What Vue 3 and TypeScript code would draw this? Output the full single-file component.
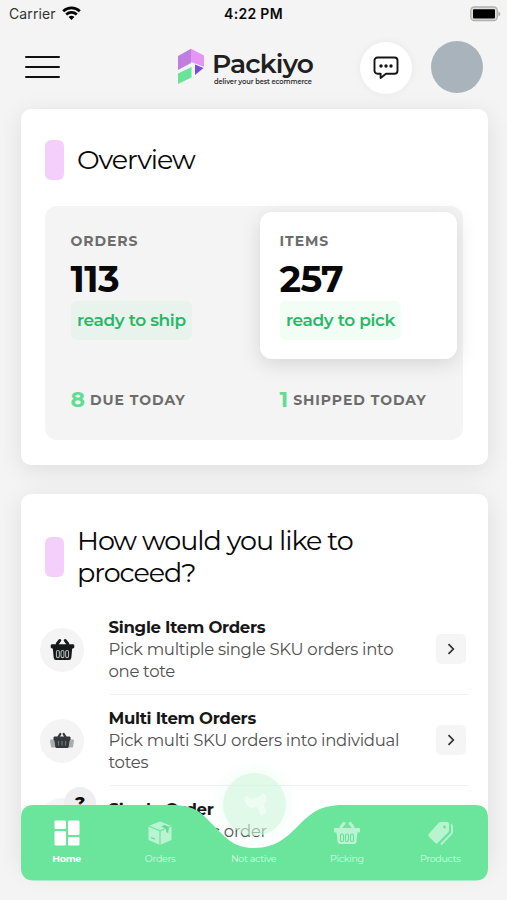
<script setup lang="ts">
interface Stat {
  label: string
  value: string
  badge: string
  raised: boolean
}
interface Count {
  value: string
  label: string
}
interface Task {
  title: string
  lines: string[]
  icon: 'single' | 'multi'
}
interface Tab {
  label: string
  icon: string
  active: boolean
}

const stats: Stat[] = [
  { label: 'ORDERS', value: '113', badge: 'ready to ship', raised: false },
  { label: 'ITEMS', value: '257', badge: 'ready to pick', raised: true },
]
const counts: Count[] = [
  { value: '8', label: 'DUE TODAY' },
  { value: '1', label: 'SHIPPED TODAY' },
]
const tasks: Task[] = [
  { title: 'Single Item Orders', lines: ['Pick multiple single SKU orders into', 'one tote'], icon: 'single' },
  { title: 'Multi Item Orders', lines: ['Pick multi SKU orders into individual', 'totes'], icon: 'multi' },
]
const tabs: Tab[] = [
  { label: 'Home', icon: 'home', active: true },
  { label: 'Orders', icon: 'box', active: false },
  { label: 'Not active', icon: 'none', active: false },
  { label: 'Picking', icon: 'basket', active: false },
  { label: 'Products', icon: 'tags', active: false },
]
</script>

<template>
  <main class="screen">
    <div class="status">
      <div class="carrier">
        <span>Carrier</span>
        <svg width="19" height="15" viewBox="0 0 19 15" fill="none" stroke="#050505" stroke-width="2.7">
          <path d="M1.2 5.2C6 .7 13 .7 17.8 5.2" />
          <path d="M4.2 8.5c3-2.8 7.600-2.800 10.600 0" />
          <path d="M6.600 10.900c1.700-1.500 4.100-1.500 5.800 0L9.500 14z" fill="#050505" stroke="none" />
        </svg>
      </div>
      <span class="clock">4:22 PM</span>
      <svg class="battery" width="31" height="16" viewBox="0 0 31 16">
        <rect x=".8" y="1" width="26.500" height="13.500" rx="3.500" fill="#dededb" stroke="#b0b0ad" stroke-width="1.300" />
        <rect x="3" y="3.200" width="22" height="9.200" rx="1" fill="#000" />
        <path d="M28.500 5.500c2.300.8 2.300 4 0 4.800z" fill="#a5a5a2" />
      </svg>
    </div>

    <header class="header">
      <button class="menu" aria-label="Menu"><i></i><i></i><i></i></button>
      <div class="logo">
        <svg width="28" height="37" viewBox="0 0 28 37">
          <path d="M1 8 14 .8V15L1 22z" fill="#c07ee0" />
          <path d="M14 .8 27 7.500v11.200L14 14z" fill="#e595f5" />
          <path d="M18 16.500 26.500 20 18 27z" fill="#7a4be3" />
          <path d="M1 25.500 14.500 19v10.500L1 36z" fill="#68e399" />
        </svg>
        <div class="wordmark">
          <span class="brand">Packiyo</span>
          <span class="slogan">deliver your best ecommerce</span>
        </div>
      </div>
      <button class="chat" aria-label="Messages">
        <svg width="26" height="24" viewBox="0 0 26 24" fill="none" stroke="#151515" stroke-width="1.900" stroke-linejoin="round">
          <path d="M4.500 1.500h17a3 3 0 0 1 3 3v10.300a3 3 0 0 1-3 3H13L7.600 22v-4.200H4.500a3 3 0 0 1-3-3V4.500a3 3 0 0 1 3-3z" />
          <g fill="#151515" stroke="none">
            <circle cx="8" cy="10" r="1.700" /><circle cx="13" cy="10" r="1.700" /><circle cx="18" cy="10" r="1.700" />
          </g>
        </svg>
      </button>
      <div class="avatar"></div>
    </header>

    <section class="card overview">
      <h2 class="heading"><i class="marker"></i><span>Overview</span></h2>
      <div class="panel">
        <div v-for="s in stats" :key="s.label" class="stat" :class="{ raised: s.raised }">
          <span class="caption">{{ s.label }}</span>
          <strong class="value">{{ s.value }}</strong>
          <span class="badge">{{ s.badge }}</span>
        </div>
        <div v-for="c in counts" :key="c.label" class="count">
          <b>{{ c.value }}</b><span class="caption">{{ c.label }}</span>
        </div>
      </div>
    </section>

    <section class="card proceed">
      <h2 class="heading"><i class="marker"></i><span>How would you like to<br />proceed?</span></h2>
      <div v-for="t in tasks" :key="t.title" class="task">
        <div class="round">
          <svg v-if="t.icon === 'single'" width="25" height="23" viewBox="0 0 26 24">
            <path d="M7.500 6 10.200 2.500M18.500 6 15.800 2.500" stroke="#17191a" stroke-width="3" stroke-linecap="round" />
            <rect x=".7" y="6.500" width="24.600" height="4.500" rx="1.500" fill="#17191a" />
            <path d="M2.800 10h20.400l-1 10.500q-.3 2.500-2.500 2.500H6.300q-2.200 0-2.500-2.500z" fill="#17191a" />
            <g fill="none" stroke="#b5b8b8" stroke-width="1.100">
              <rect x="6.700" y="13" width="3" height="7.500" rx="1.400" /><rect x="11.500" y="13" width="3" height="7.500" rx="1.400" /><rect x="16.300" y="13" width="3" height="7.500" rx="1.400" />
            </g>
          </svg>
          <svg v-else width="26" height="18" viewBox="0 0 26 18">
            <path d="M2 8.500h22l-1 6H3z" fill="#aaaead" stroke="#aaaead" stroke-width="2" stroke-linejoin="round" />
            <path d="M9.500 5 11.300 2M16.500 5 14.700 2" stroke="#35393b" stroke-width="2.300" stroke-linecap="round" />
            <path d="M5 5h16v3h-.8L19 15.500H7L5.800 8H5z" fill="#35393b" stroke="#35393b" stroke-linejoin="round" />
            <path d="M9.500 9v4.500M13 9v4.500M16.500 9v4.500" stroke="#6d7374" stroke-width="1.200" />
          </svg>
        </div>
        <div class="body">
          <div class="copy">
            <strong>{{ t.title }}</strong>
            <span v-for="l in t.lines" :key="l">{{ l }}</span>
          </div>
          <button class="go" aria-label="Open">
            <svg width="8" height="12" viewBox="0 0 8 12" fill="none" stroke="#303030" stroke-width="1.700"><path d="m1.500 1.200 4.800 4.800-4.800 4.800" /></svg>
          </button>
        </div>
      </div>
      <div class="task last">
        <div class="round"><span class="help">?</span></div>
        <div class="body"><div class="copy"><strong>Single Order</strong><span>Pick a specific order</span></div></div>
      </div>
    </section>

    <div class="fab">
      <svg width="30" height="30" viewBox="0 0 30 30" fill="#effcf4"><path d="M4 7 8 6 10 9.500 20 6 23 3.500 26 5 26.500 11 24 14.500 26.500 23 21 26 17.500 17 12 18 8 17 5 12z" /></svg>
    </div>

    <nav class="nav">
      <svg class="nav-shape" width="467" height="76" viewBox="0 0 467 76">
        <path d="M13 0H150C176 0 181 9 193 21C205 33 213 43 233 43C255 43 266 32 278 20C292 6 301 0 323 0H454Q467 0 467 13V62.500Q467 75.500 454 75.500H13Q0 75.500 0 62.500V13Q0 0 13 0Z" fill="#6be59b" />
      </svg>
      <div v-for="t in tabs" :key="t.label" class="tab" :class="{ active: t.active }">
        <svg v-if="t.icon === 'home'" width="26" height="26" viewBox="0 0 26 26" fill="#fff">
          <rect x=".5" y=".5" width="11.500" height="8.500" rx="1.200" /><rect x="14" y=".5" width="11.500" height="14.500" rx="1.200" />
          <rect x=".5" y="11" width="11.500" height="14.500" rx="1.200" /><rect x="14" y="17" width="11.500" height="8.500" rx="1.200" />
        </svg>
        <svg v-else-if="t.icon === 'box'" width="26" height="26" viewBox="0 0 26 26">
          <path d="M13 1.500 24.500 6v14L13 25 1.500 20V6z" fill="#b9f4d0" />
          <path d="M1.500 6 13 10.800 24.500 6M13 10.800V25" fill="none" stroke="#6be59b" stroke-width="1.200" />
          <path d="m14 6.500 3.500-1.500 4.500 2-.8 6-2-1v-3.500z" fill="#63d991" /><path d="m4 17.500 4 1.800" stroke="#63d991" stroke-width="1.200" />
        </svg>
        <svg v-else-if="t.icon === 'basket'" width="26" height="26" viewBox="0 0 26 26">
          <path d="M7 7 10 3.300M19 7 16 3.300" stroke="#b9f4d0" stroke-width="3" stroke-linecap="round" />
          <rect x="0" y="8" width="26" height="4.500" rx="1" fill="#b9f4d0" />
          <path d="M2.500 12h21l-1 9.500q-.3 2.500-2.500 2.500H6q-2.200 0-2.500-2.500z" fill="#b9f4d0" />
          <g fill="none" stroke="#6bdd99" stroke-width="1.100"><rect x="6.500" y="14" width="3" height="7.500" rx="1.400" /><rect x="11.500" y="14" width="3" height="7.500" rx="1.400" /><rect x="16.500" y="14" width="3" height="7.500" rx="1.400" /></g>
        </svg>
        <svg v-else-if="t.icon === 'tags'" width="26" height="26" viewBox="0 0 26 26">
          <path d="M11.500 3q1-1 2.500-1h6q2 0 2 2v6q0 1.500-1 2.500L10.700 23q-1.200 1.200-2.400 0l-6.500-6.500q-1.200-1.200 0-2.400z" fill="#b9f4d0" />
          <circle cx="17.500" cy="7" r="1.400" fill="#6be59b" />
          <path d="M24 4.500q1 .8 1 2v5.500q0 1-.8 2L14 24.500" fill="none" stroke="#b9f4d0" stroke-width="1.800" />
        </svg>
        <span v-else class="blank"></span>
        <span class="tab-label">{{ t.label }}</span>
      </div>
    </nav>
  </main>
</template>

<style>
body { margin: 0; background: #f4f4f4; }
</style>

<style scoped>
* { box-sizing: border-box; }
.screen { position: relative; width: 507px; height: 900px; overflow: hidden; background: #f4f4f4; font-family: Montserrat, Inter, sans-serif; color: #080808; }
button { border: 0; padding: 0; font: inherit; }
i { display: block; }
.status { height: 28px; display: grid; grid-template-columns: 1fr auto 1fr; align-items: center; padding: 0 6px 1px 9px; font-family: Inter, sans-serif; font-size: 14px; }
.carrier { display: flex; align-items: center; gap: 6px; color: #333; letter-spacing: .1px; }
.clock { font-weight: 600; font-size: 14px; letter-spacing: .3px; margin-left: -3px; }
.battery { justify-self: end; }
.header { height: 81px; display: flex; align-items: center; padding: 0 24px 3px 25px; }
.menu { width: 35px; display: grid; gap: 7.500px; background: none; }
.menu i { height: 2.200px; border-radius: 2px; background: #101010; }
.logo { display: flex; gap: 8px; margin-left: 117px; width: 183px; height: 39px; }
.wordmark { display: flex; flex-direction: column; white-space: nowrap; }
.brand { font-size: 26.500px; font-weight: 600; line-height: 31px; letter-spacing: -.8px; margin-left: -1px; color: #202020; }
.slogan { font-size: 6.700px; font-weight: 600; line-height: 8px; letter-spacing: -.1px; padding-left: 1px; margin-top: -1px; color: #333; }
.chat { width: 52px; height: 52px; border-radius: 50%; background: #fff; display: grid; place-items: center; box-shadow: 0 0 8px #0000000d; margin-left: 0; margin-top: 2px; }
.avatar { width: 52px; height: 52px; border-radius: 50%; margin-left: 19.500px; background: #a9b3bc; }
.card { position: relative; margin: 0 19.500px 0 20.500px; background: #fff; border-radius: 10px; box-shadow: 0 5px 24px #00000018; }
.overview { height: 356px; padding: 31px 24.500px 25px 24px; }
.heading { margin: 0; display: flex; align-items: center; gap: 13px; font-weight: 400; font-size: 27px; line-height: 32px; letter-spacing: -1.050px; }
.marker { width: 19.500px; height: 39.500px; border-radius: 6px; background: #f4cffb; }
.panel { margin-top: 26.500px; height: 234px; border-radius: 12px; background: #f4f4f4; display: grid; grid-template-columns: 209px 197px; grid-template-rows: 147px 1fr; padding: 6px; }
.stat { display: flex; flex-direction: column; align-items: flex-start; padding: 20px; border-radius: 12px; }
.stat.raised { background: #fff; box-shadow: 0 5px 20px #00000020; }
.caption { font-size: 14px; line-height: 19px; font-weight: 700; color: #6c6c6c; letter-spacing: .95px; white-space: nowrap; }
.value { font-size: 36.500px; line-height: 45px; font-weight: 700; letter-spacing: -.6px; margin-top: 6px; }
.badge { height: 38.500px; line-height: 39px; margin-top: -1px; padding: 0 6.500px; border-radius: 6px; background: #e8f3ed; color: #2ab765; font-weight: 600; font-size: 17px; letter-spacing: -.36px; white-space: nowrap; }
.raised .badge { background: #f2fdf6; }
.count { padding: 29px 20px 0; display: flex; align-items: center; height: 53px; gap: 5px; }
.count b { color: #62dc91; font-size: 22px; line-height: 24px; font-weight: 700; }
.proceed { height: 372px; margin-top: 29px; padding: 31px 19.500px 0; overflow: hidden; }
.proceed .heading { padding-left: 4.500px; }
.task { display: flex; align-items: center; gap: 24.500px; height: 91px; }
.heading + .task { margin-top: 15.400px; }
.round { position: relative; width: 44px; height: 44px; border-radius: 50%; background: #f4f4f4; display: grid; place-items: center; flex: none; }
.body { flex: 1; height: 91px; display: flex; align-items: center; justify-content: space-between; border-bottom: 1.500px solid #f0f0f0; padding-right: 2px; }
.copy { display: flex; flex-direction: column; font-size: 16.500px; line-height: 22px; color: #505050; white-space: nowrap; letter-spacing: -.3px; }
.copy strong { color: #171717; font-weight: 700; letter-spacing: -.28px; }
.go { width: 30px; height: 30px; border-radius: 5px; background: #f5f5f5; display: grid; place-items: center; }
.last { align-items: flex-start; }
.last .round { margin-top: 12px; }
.last .body { align-items: flex-start; padding-top: 12px; }
.help { position: absolute; left: 24px; top: -11px; width: 32px; height: 32px; border-radius: 50%; background: #eee; color: #090909; font-size: 17px; font-weight: 800; text-align: center; line-height: 31px; }
.fab { position: absolute; left: 223px; top: 773px; width: 63px; height: 63px; border-radius: 50%; background: #cdf6dca0; box-shadow: 0 0 18px #6be59b20; display: grid; place-items: center; }
.nav { position: absolute; left: 20.500px; top: 805px; width: 467px; height: 76px; display: grid; grid-template-columns: repeat(5, 1fr); }
.nav-shape { position: absolute; left: 0; top: 0; }
.tab { position: relative; display: flex; flex-direction: column; align-items: center; padding-top: 15px; right: .5px; color: #d2fae1; }
.blank { width: 26px; height: 26px; }
.tab-label { font-size: 9.500px; line-height: 14px; margin-top: 6px; letter-spacing: -.3px; }
.active { color: #fff; }
.active .tab-label { font-weight: 700; }
</style>
